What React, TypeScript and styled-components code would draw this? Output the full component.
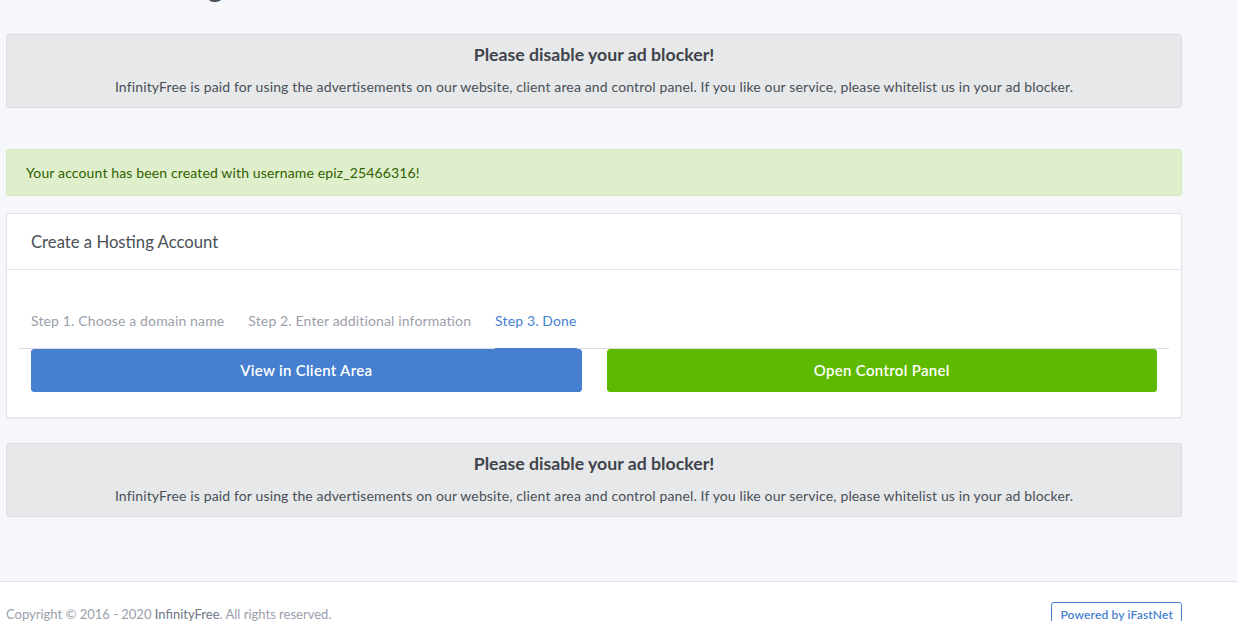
import React from "react";
import styled, { createGlobalStyle } from "styled-components";

const GlobalStyle = createGlobalStyle`
  html, body {
    margin: 0;
    padding: 0;
    background: #f5f7fb;
  }
  body {
    font-family: "Lato", "Liberation Sans", sans-serif;
    font-size: 14px;
    line-height: 1.5;
    letter-spacing: 0.14px;
    color: #495057;
    -webkit-font-smoothing: antialiased;
  }
  * { box-sizing: border-box; }
`;

const Page = styled.div`
  min-height: 100vh;
  display: flex;
  flex-direction: column;
  background: #f5f7fb;
`;

const Main = styled.main`
  width: 1176px;
  margin: 0 0 0 6px;
  padding-bottom: 64px;
`;

const PageTitle = styled.h1`
  margin: -30px 0 32px;
  font-size: 29.5px;
  line-height: 32px;
  font-weight: 400;
  letter-spacing: 0;
  color: #495057;
`;

const AdNotice = styled.div<{ $gap: number }>`
  background: #e7e8ea;
  border: 1px solid #dcdde1;
  border-radius: 3px;
  padding: 10px 20px;
  text-align: center;
  margin-bottom: ${(p) => p.$gap}px;
`;

const AdTitle = styled.h4`
  margin: 0 0 11px;
  font-size: 17.7px;
  line-height: 20px;
  font-weight: 700;
  letter-spacing: 0;
  color: #3f444b;
`;

const AdText = styled.p`
  margin: 0;
  font-size: 14px;
  line-height: 21px;
  color: #495057;
`;

const SuccessAlert = styled.div`
  background: #dfefcc;
  border: 1px solid #d2e9ba;
  border-radius: 3px;
  color: #316100;
  padding: 12px 19px;
  line-height: 21px;
  margin-bottom: 17px;
`;

const Card = styled.section`
  background: #fff;
  border: 1px solid rgba(0, 40, 100, 0.12);
  border-radius: 3px;
  box-shadow: 0 1px 2px rgba(0, 0, 0, 0.05);
  margin-bottom: 25px;
`;

const CardHeader = styled.div`
  height: 56px;
  display: flex;
  align-items: center;
  padding: 1px 24px 0;
  border-bottom: 1px solid rgba(0, 40, 100, 0.12);
`;

const CardTitle = styled.h3`
  margin: 0;
  font-size: 16.7px;
  line-height: 1.2;
  font-weight: 400;
  letter-spacing: 0;
  color: #495057;
`;

const CardBody = styled.div`
  padding: 24px 12px 25px;
`;

const Tabs = styled.ul`
  list-style: none;
  margin: 0;
  padding: 0;
  display: flex;
  border-bottom: 1px solid #dcdde1;
`;

const Tab = styled.li<{ $active?: boolean }>`
  margin: 0 12px -1px;
  padding: 16px 0 17px;
  line-height: 21px;
  color: ${(p) => (p.$active ? "#467fcf" : "#9aa0ac")};
  border-bottom: 1px solid ${(p) => (p.$active ? "#467fcf" : "transparent")};
`;

const Actions = styled.div`
  display: grid;
  grid-template-columns: 1fr 1fr;
  column-gap: 25px;
  padding: 0 12px;
`;

const ActionButton = styled.a<{ $variant: "blue" | "green" }>`
  display: block;
  text-align: center;
  text-decoration: none;
  font-size: 15px;
  font-weight: 600;
  line-height: 27px;
  height: 43px;
  padding: 7px 12px;
  letter-spacing: 0.3px;
  border: 1px solid ${(p) => (p.$variant === "blue" ? "#467fcf" : "#5eba00")};
  border-radius: 3px;
  color: #fff;
  background: ${(p) => (p.$variant === "blue" ? "#467fcf" : "#5eba00")};
`;

const Footer = styled.footer`
  background: #fff;
  border-top: 1px solid rgba(0, 40, 100, 0.12);
  padding: 20px 0;
  flex: 1;
`;

const FooterInner = styled.div`
  width: 1176px;
  margin-left: 6px;
  display: flex;
  justify-content: space-between;
  align-items: flex-start;
  color: #9aa0ac;
  font-size: 13px;
  line-height: 21px;
  letter-spacing: 0;
`;

const Copyright = styled.span`
  padding-top: 2px;
`;

const FooterLink = styled.a`
  color: #6e7687;
  text-decoration: none;
`;

const PoweredButton = styled.a`
  font-size: 12px;
  font-weight: 600;
  line-height: 18px;
  padding: 3px 8px;
  letter-spacing: 0.15px;
  color: #467fcf;
  border: 1px solid #467fcf;
  border-radius: 3px;
  text-decoration: none;
`;

function AdBlockNotice({ gap }: { gap: number }) {
  return (
    <AdNotice $gap={gap}>
      <AdTitle>Please disable your ad blocker!</AdTitle>
      <AdText>
        InfinityFree is paid for using the advertisements on our website, client area and control panel. If you like our
        service, please whitelist us in your ad blocker.
      </AdText>
    </AdNotice>
  );
}

export default function App() {
  return (
    <>
      <GlobalStyle />
      <Page>
        <Main>
          <PageTitle>Create a Hosting Account</PageTitle>
          <AdBlockNotice gap={41} />
          <SuccessAlert>Your account has been created with username epiz_25466316!</SuccessAlert>
          <Card>
            <CardHeader>
              <CardTitle>Create a Hosting Account</CardTitle>
            </CardHeader>
            <CardBody>
              <Tabs>
                <Tab>Step 1. Choose a domain name</Tab>
                <Tab>Step 2. Enter additional information</Tab>
                <Tab $active>Step 3. Done</Tab>
              </Tabs>
              <Actions>
                <ActionButton $variant="blue" href="#">View in Client Area</ActionButton>
                <ActionButton $variant="green" href="#">Open Control Panel</ActionButton>
              </Actions>
            </CardBody>
          </Card>
          <AdBlockNotice gap={0} />
        </Main>
        <Footer>
          <FooterInner>
            <Copyright>
              Copyright © 2016 - 2020 <FooterLink href="#">InfinityFree</FooterLink>. All rights reserved.
            </Copyright>
            <PoweredButton href="#">Powered by iFastNet</PoweredButton>
          </FooterInner>
        </Footer>
      </Page>
    </>
  );
}
